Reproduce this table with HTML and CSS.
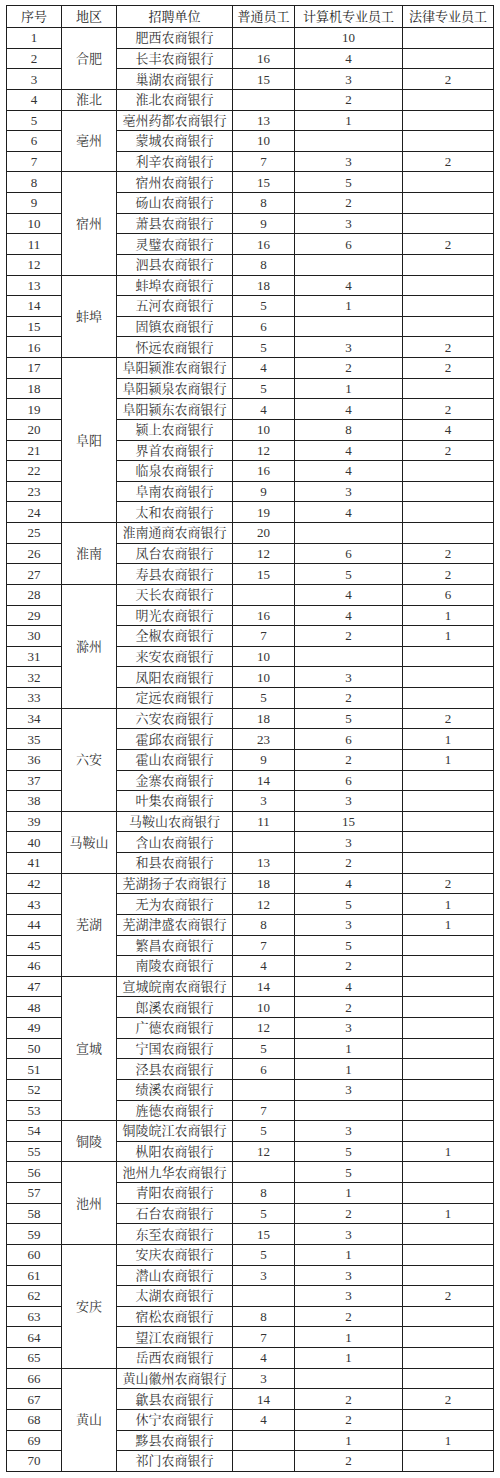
FILE: index.html
```html
<!DOCTYPE html>
<html lang="zh">
<head>
<meta charset="utf-8">
<title>招聘计划表</title>
<link rel="stylesheet" href="styles.css">
</head>
<body>
<table class="plan">
<colgroup>
<col class="c-no"><col class="c-area"><col class="c-unit"><col class="c-gen"><col class="c-it"><col class="c-law">
</colgroup>
<thead>
<tr><th>序号</th><th>地区</th><th>招聘单位</th><th>普通员工</th><th>计算机专业员工</th><th>法律专业员工</th></tr>
</thead>
<tbody>
<tr><td>1</td><td rowspan="3">合肥</td><td>肥西农商银行</td><td></td><td>10</td><td></td></tr>
<tr><td>2</td><td>长丰农商银行</td><td>16</td><td>4</td><td></td></tr>
<tr><td>3</td><td>巢湖农商银行</td><td>15</td><td>3</td><td>2</td></tr>
<tr><td>4</td><td>淮北</td><td>淮北农商银行</td><td></td><td>2</td><td></td></tr>
<tr><td>5</td><td rowspan="3">亳州</td><td>亳州药都农商银行</td><td>13</td><td>1</td><td></td></tr>
<tr><td>6</td><td>蒙城农商银行</td><td>10</td><td></td><td></td></tr>
<tr><td>7</td><td>利辛农商银行</td><td>7</td><td>3</td><td>2</td></tr>
<tr><td>8</td><td rowspan="5">宿州</td><td>宿州农商银行</td><td>15</td><td>5</td><td></td></tr>
<tr><td>9</td><td>砀山农商银行</td><td>8</td><td>2</td><td></td></tr>
<tr><td>10</td><td>萧县农商银行</td><td>9</td><td>3</td><td></td></tr>
<tr><td>11</td><td>灵璧农商银行</td><td>16</td><td>6</td><td>2</td></tr>
<tr><td>12</td><td>泗县农商银行</td><td>8</td><td></td><td></td></tr>
<tr><td>13</td><td rowspan="4">蚌埠</td><td>蚌埠农商银行</td><td>18</td><td>4</td><td></td></tr>
<tr><td>14</td><td>五河农商银行</td><td>5</td><td>1</td><td></td></tr>
<tr><td>15</td><td>固镇农商银行</td><td>6</td><td></td><td></td></tr>
<tr><td>16</td><td>怀远农商银行</td><td>5</td><td>3</td><td>2</td></tr>
<tr><td>17</td><td rowspan="8">阜阳</td><td>阜阳颍淮农商银行</td><td>4</td><td>2</td><td>2</td></tr>
<tr><td>18</td><td>阜阳颍泉农商银行</td><td>5</td><td>1</td><td></td></tr>
<tr><td>19</td><td>阜阳颍东农商银行</td><td>4</td><td>4</td><td>2</td></tr>
<tr><td>20</td><td>颍上农商银行</td><td>10</td><td>8</td><td>4</td></tr>
<tr><td>21</td><td>界首农商银行</td><td>12</td><td>4</td><td>2</td></tr>
<tr><td>22</td><td>临泉农商银行</td><td>16</td><td>4</td><td></td></tr>
<tr><td>23</td><td>阜南农商银行</td><td>9</td><td>3</td><td></td></tr>
<tr><td>24</td><td>太和农商银行</td><td>19</td><td>4</td><td></td></tr>
<tr><td>25</td><td rowspan="3">淮南</td><td>淮南通商农商银行</td><td>20</td><td></td><td></td></tr>
<tr><td>26</td><td>凤台农商银行</td><td>12</td><td>6</td><td>2</td></tr>
<tr><td>27</td><td>寿县农商银行</td><td>15</td><td>5</td><td>2</td></tr>
<tr><td>28</td><td rowspan="6">滁州</td><td>天长农商银行</td><td></td><td>4</td><td>6</td></tr>
<tr><td>29</td><td>明光农商银行</td><td>16</td><td>4</td><td>1</td></tr>
<tr><td>30</td><td>全椒农商银行</td><td>7</td><td>2</td><td>1</td></tr>
<tr><td>31</td><td>来安农商银行</td><td>10</td><td></td><td></td></tr>
<tr><td>32</td><td>凤阳农商银行</td><td>10</td><td>3</td><td></td></tr>
<tr><td>33</td><td>定远农商银行</td><td>5</td><td>2</td><td></td></tr>
<tr><td>34</td><td rowspan="5">六安</td><td>六安农商银行</td><td>18</td><td>5</td><td>2</td></tr>
<tr><td>35</td><td>霍邱农商银行</td><td>23</td><td>6</td><td>1</td></tr>
<tr><td>36</td><td>霍山农商银行</td><td>9</td><td>2</td><td>1</td></tr>
<tr><td>37</td><td>金寨农商银行</td><td>14</td><td>6</td><td></td></tr>
<tr><td>38</td><td>叶集农商银行</td><td>3</td><td>3</td><td></td></tr>
<tr><td>39</td><td rowspan="3">马鞍山</td><td>马鞍山农商银行</td><td>11</td><td>15</td><td></td></tr>
<tr><td>40</td><td>含山农商银行</td><td></td><td>3</td><td></td></tr>
<tr><td>41</td><td>和县农商银行</td><td>13</td><td>2</td><td></td></tr>
<tr><td>42</td><td rowspan="5">芜湖</td><td>芜湖扬子农商银行</td><td>18</td><td>4</td><td>2</td></tr>
<tr><td>43</td><td>无为农商银行</td><td>12</td><td>5</td><td>1</td></tr>
<tr><td>44</td><td>芜湖津盛农商银行</td><td>8</td><td>3</td><td>1</td></tr>
<tr><td>45</td><td>繁昌农商银行</td><td>7</td><td>5</td><td></td></tr>
<tr><td>46</td><td>南陵农商银行</td><td>4</td><td>2</td><td></td></tr>
<tr><td>47</td><td rowspan="7">宣城</td><td>宣城皖南农商银行</td><td>14</td><td>4</td><td></td></tr>
<tr><td>48</td><td>郎溪农商银行</td><td>10</td><td>2</td><td></td></tr>
<tr><td>49</td><td>广德农商银行</td><td>12</td><td>3</td><td></td></tr>
<tr><td>50</td><td>宁国农商银行</td><td>5</td><td>1</td><td></td></tr>
<tr><td>51</td><td>泾县农商银行</td><td>6</td><td>1</td><td></td></tr>
<tr><td>52</td><td>绩溪农商银行</td><td></td><td>3</td><td></td></tr>
<tr><td>53</td><td>旌德农商银行</td><td>7</td><td></td><td></td></tr>
<tr><td>54</td><td rowspan="2">铜陵</td><td>铜陵皖江农商银行</td><td>5</td><td>3</td><td></td></tr>
<tr><td>55</td><td>枞阳农商银行</td><td>12</td><td>5</td><td>1</td></tr>
<tr><td>56</td><td rowspan="4">池州</td><td>池州九华农商银行</td><td></td><td>5</td><td></td></tr>
<tr><td>57</td><td>青阳农商银行</td><td>8</td><td>1</td><td></td></tr>
<tr><td>58</td><td>石台农商银行</td><td>5</td><td>2</td><td>1</td></tr>
<tr><td>59</td><td>东至农商银行</td><td>15</td><td>3</td><td></td></tr>
<tr><td>60</td><td rowspan="6">安庆</td><td>安庆农商银行</td><td>5</td><td>1</td><td></td></tr>
<tr><td>61</td><td>潜山农商银行</td><td>3</td><td>3</td><td></td></tr>
<tr><td>62</td><td>太湖农商银行</td><td></td><td>3</td><td>2</td></tr>
<tr><td>63</td><td>宿松农商银行</td><td>8</td><td>2</td><td></td></tr>
<tr><td>64</td><td>望江农商银行</td><td>7</td><td>1</td><td></td></tr>
<tr><td>65</td><td>岳西农商银行</td><td>4</td><td>1</td><td></td></tr>
<tr><td>66</td><td rowspan="5">黄山</td><td>黄山徽州农商银行</td><td>3</td><td></td><td></td></tr>
<tr><td>67</td><td>歙县农商银行</td><td>14</td><td>2</td><td>2</td></tr>
<tr><td>68</td><td>休宁农商银行</td><td>4</td><td>2</td><td></td></tr>
<tr><td>69</td><td>黟县农商银行</td><td></td><td>1</td><td>1</td></tr>
<tr><td>70</td><td>祁门农商银行</td><td></td><td>2</td><td></td></tr>
</tbody>
</table>
</body>
</html>
```

FILE: styles.css
```css
html, body {
  margin: 0;
  padding: 0;
  background: #ffffff;
}

body {
  padding: 5px 0 0 6px;
  font-family: "Liberation Serif", "Noto Serif CJK SC", "Noto Sans CJK SC", serif;
  color: #333333;
}

.plan {
  border-collapse: collapse;
  table-layout: fixed;
  width: 487px;
  font-size: 13px;
}

.c-no { width: 55px; }
.c-area { width: 55px; }
.c-unit { width: 116px; }
.c-gen { width: 62px; }
.c-it { width: 108px; }
.c-law { width: 91px; }

.plan th,
.plan td {
  border: 1.5px solid #1e1e1e;
  padding: 0;
  text-align: center;
  vertical-align: middle;
  white-space: nowrap;
  line-height: 1;
  font-weight: normal;
}

.plan thead tr {
  height: 22px;
}

.plan th {
  color: #1e1e1e;
}

.plan tbody tr {
  height: 20.64px;
}
```
